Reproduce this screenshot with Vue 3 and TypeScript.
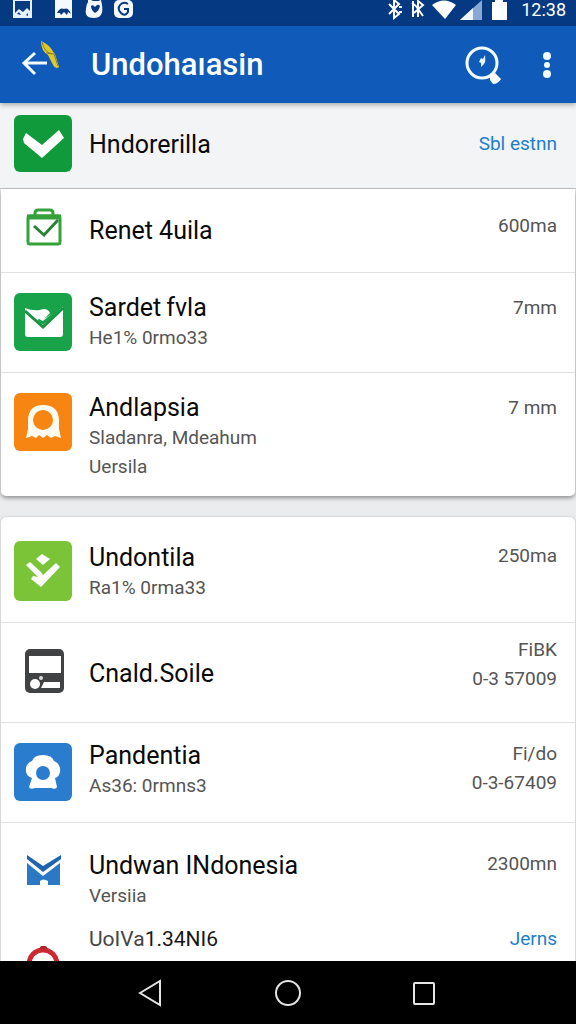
<script setup lang="ts">
interface Row {
  icon: string
  title: string
  lines: string[]
  meta: string[]
  size: string
}

const first: Row[] = [
  { icon: 'bag', title: 'Renet 4uila', lines: [], meta: ['600ma'], size: 'short' },
  { icon: 'mail', title: 'Sardet\u2009fvla', lines: ['He1% 0rmo33'], meta: ['7mm'], size: 'normal' },
  { icon: 'bell', title: 'Andlapsia', lines: ['Sladanra, Mdeahum', 'Uersila'], meta: ['7 mm'], size: 'long' },
]

const second: Row[] = [
  { icon: 'leaf', title: 'Undontila', lines: ['Ra1% 0rma33'], meta: ['250ma'], size: 'lead' },
  { icon: 'bus', title: 'Cnald.Soile', lines: [], meta: ['FiBK', '0-3 57009'], size: 'single' },
  { icon: 'badge', title: 'Pandentia', lines: ['As36: 0rmns3'], meta: ['Fi/do', '0-3-67409'], size: 'tight' },
  { icon: 'castle', title: 'Undwan INdonesia', lines: ['Versiia'], meta: ['2300mn'], size: 'last' },
]

const groups: Row[][] = [first, second]
</script>

<template>
  <div class="screen">
    <div class="status">
      <svg class="notices" width="136" height="20" viewBox="0 0 136 20" aria-hidden="true">
        <path d="M13 0H32V18H13Z" fill="#e6f1ff" />
        <path d="M15 1H30V11L27 8L23 12L19 9L15 13Z" fill="#073a80" />
        <path d="M17 14l2-2 2 3zM26 15l2-2v3z" fill="#073a80" />
        <path d="M55 0H72V18H55Z" fill="#f4f9ff" />
        <path d="M57 13q3-6 7-4q4-2 7 5l-3-2-1 3-3-3-3 3-1-2z" fill="#073a80" />
        <path d="M88 0h3l2 1h5l3-1 1 5q2 13-8 13t-8-9q0-4 2-7z" fill="#f4f9ff" />
        <path d="M91 6q2-2 4 1q3-4 5-1q-1 5-5 7q-4-3-4-7z" fill="#073a80" />
        <rect x="114" y="0" width="19" height="18" rx="5" fill="#f4f9ff" />
        <path d="M128 4q-5-3-8 1t1 8t7-1V9h-4" fill="none" stroke="#073a80" stroke-width="2" />
      </svg>
      <div class="system">
        <svg width="126" height="20" viewBox="0 0 126 20" aria-hidden="true">
          <g fill="none" stroke="#fff" stroke-width="2">
            <path d="M2 4l10 10-5 4V0l5 4L2 14M12 7h3M12 12h3" />
            <path d="M26 1v16M31 17V1l5 4-9 8M29 6l7 10M25 3l4 3" />
          </g>
          <path d="M45 5Q57-4 69 5L58 19Z" fill="#fff" />
          <path d="M73 20L95 0V20Z" fill="#89a9d5" />
          <path d="M73 20L86 8V20Z" fill="#eef5ff" />
          <path d="M105 2h3V0h8v2h4v18h-15z" fill="#fff" />
        </svg>
        <span>12:38</span>
      </div>
    </div>

    <header class="toolbar">
      <button class="back" aria-label="Back">
        <svg width="40" height="36" viewBox="0 0 40 36">
          <path d="M28 22H5M16 12L5 22L16 33" fill="none" stroke="#f2fbff" stroke-width="3" />
          <path d="M22 0q8 3 13 12l1 1 4 13q-4 3-7-4l-4-8q-7-4-7-14z" fill="#dfc928" />
          <path d="M23 1q2 10 10 12M27 12l8 1 4 12" fill="none" stroke="#877e35" stroke-width="1" />
        </svg>
      </button>
      <h1>Undohaıasin</h1>
      <button class="search" aria-label="Search">
        <svg width="38" height="40" viewBox="0 0 38 40">
          <circle cx="18" cy="18" r="15" fill="none" stroke="#f2fbff" stroke-width="3" />
          <path d="M26 31l4-4 7 7q-3 5-8 5l-3-4z" fill="#fff" />
          <path d="M21 10q1 7-1 9l-3 3v-4l-2-1 2-4 2 1z" fill="#e4f4ff" />
        </svg>
      </button>
      <button class="more" aria-label="More options">
        <svg width="10" height="28" viewBox="0 0 10 28" fill="#f2fbff">
          <circle cx="5" cy="5" r="4" /><circle cx="5" cy="14" r="3" /><circle cx="5" cy="23" r="4" />
        </svg>
      </button>
    </header>

    <main>
      <section class="heading">
        <svg class="icon" width="58" height="58" viewBox="0 0 58 58" aria-hidden="true">
          <rect width="58" height="57" rx="6" fill="#119a3c" />
          <path d="M9 24L12 18L28 30L45 15L50 23L28 43L10 28Z" fill="#fff" />
        </svg>
        <h2>Hndorerilla</h2>
        <a href="#all">Sbl estnn</a>
      </section>

      <ul v-for="(rows, g) in groups" :key="g" class="card" :class="{ open: g === 1 }">
        <li v-for="row in rows" :key="row.title" :class="row.size">
          <svg class="icon" width="58" height="60" viewBox="0 0 58 60" aria-hidden="true">
            <g v-if="row.icon === 'bag'" fill="none" stroke="#35a13b">
              <rect x="14" y="17" width="32" height="28" rx="2" stroke-width="3" />
              <path d="M13 18H47" stroke-width="5" />
              <path d="M21 17V14Q21 11 24 11H36Q39 11 39 14V17" stroke-width="3" />
              <path d="M20 27L30 36L44 21" stroke="#278333" stroke-width="3" />
            </g>
            <g v-else-if="row.icon === 'mail'">
              <rect width="58" height="58" rx="6" fill="#18a24a" />
              <path d="M11 15Q18 18 26 17Q33 14 36 20L30 26L49 14V41Q49 44 46 44H14Q11 44 11 41Z" fill="#fff" />
              <path d="M11 18L29 34L49 15" fill="none" stroke="#18923f" stroke-width="3" />
              <path d="M24 27L29 30L45 17" fill="none" stroke="#18a24a" stroke-width="3" />
            </g>
            <g v-else-if="row.icon === 'bell'">
              <rect width="58" height="58" rx="6" fill="#f68512" />
              <path d="M14 28Q14 12 29 12Q45 12 45 28V36L47 45L41 43L37 45L33 42L29 45L25 42L22 45L18 43L12 45L14 36Z" fill="#fffbee" />
              <circle cx="29" cy="27" r="10" fill="#f68512" />
            </g>
            <g v-else-if="row.icon === 'leaf'">
              <rect width="58" height="60" rx="6" fill="#7bc437" />
              <path d="M22 18L28 13L36 18L29 24Z" fill="#fff" />
              <path d="M12 24L16 21L27 31L29 34L42 22L46 26L27 46L17 38L19 35L24 36Z" fill="#fff" />
            </g>
            <g v-else-if="row.icon === 'bus'">
              <rect x="11" y="8" width="39" height="44" rx="5" fill="#414244" />
              <path d="M15 15H47V32H15Z" fill="#fff" />
              <circle cx="21" cy="43" r="5" fill="#fff" />
              <path d="M27 47L30 41H46V47Z" fill="#fff" />
              <circle cx="27" cy="37" r="2" fill="#ddd" />
            </g>
            <g v-else-if="row.icon === 'badge'">
              <rect width="58" height="58" rx="6" fill="#2a7dce" />
              <path d="M18 18Q20 12 29 12Q38 12 40 18Q47 21 46 29Q45 34 41 35L43 44Q42 47 37 45H21Q16 47 15 44L18 35Q12 33 12 28Q11 21 18 18Z" fill="#fff" />
              <circle cx="29" cy="30" r="7" fill="#2a7dce" />
            </g>
            <g v-else fill="#2b78c5">
              <path d="M13 4L29 15L47 4V8L29 21L13 8Z" fill="#1e63ac" />
              <path d="M13 12L29 25L46 12V34H34V30Q29 27 26 30V34H13Z" />
            </g>
          </svg>
          <div class="text">
            <h3>{{ row.title }}</h3>
            <p v-for="line in row.lines" :key="line">{{ line }}</p>
          </div>
          <div class="meta">
            <p v-for="m in row.meta" :key="m">{{ m }}</p>
          </div>
        </li>
        <li v-if="g === 1" class="more-row">
          <svg class="icon" width="58" height="60" viewBox="0 0 58 60" aria-hidden="true">
            <circle cx="29" cy="18" r="14" fill="none" stroke="#cc2931" stroke-width="5" />
            <path d="M25 3l2-3h5l2 3z" fill="#a92830" />
          </svg>
          <p class="text version"><span>UoIVa</span>1.34NI6</p>
          <a href="#more">Jerns</a>
        </li>
      </ul>
    </main>

    <nav>
      <button aria-label="Back">
        <svg width="28" height="28" viewBox="0 0 28 28"><path d="M3 14L23 2V26Z" /></svg>
      </button>
      <button aria-label="Home">
        <svg width="28" height="28" viewBox="0 0 28 28"><circle cx="14" cy="14" r="12" /></svg>
      </button>
      <button aria-label="Recent apps">
        <svg width="28" height="28" viewBox="0 0 28 28"><rect x="3" y="4" width="20" height="21" rx="1" /></svg>
      </button>
    </nav>
  </div>
</template>

<style>
body {
  margin: 0;
}
</style>

<style scoped>
.screen {
  display: flex;
  flex-direction: column;
  height: 100vh;
  background: #ebecee;
  color: #0a0a0a;
  font-family: Roboto, "Liberation Sans", sans-serif;
}
h1, h2, h3, p, ul {
  margin: 0;
  padding: 0;
  font-weight: 400;
}
button {
  display: flex;
  padding: 0;
  border: 0;
  background: none;
}
svg {
  display: block;
  flex: none;
}
.status {
  display: flex;
  justify-content: space-between;
  flex: none;
  height: 26px;
  background: #053a82;
}
.system {
  display: flex;
  gap: 8px;
  padding-right: 10px;
  color: #fff;
  font-size: 18px;
  line-height: 20px;
}
.toolbar {
  display: flex;
  align-items: center;
  flex: none;
  height: 77px;
  padding: 0 24px 0 19px;
  background: #105bb9;
  box-shadow: 0 2px 5px rgba(0, 0, 0, 0.3);
  z-index: 1;
}
.back {
  padding-bottom: 12px;
}
h1 {
  flex: 1;
  padding-left: 32px;
  color: #fff;
  font-size: 31px;
  font-weight: 500;
}
.search {
  margin-right: 40px;
}
main {
  flex: 1;
  min-height: 0;
  overflow: hidden;
}
.heading {
  display: flex;
  align-items: center;
  box-sizing: border-box;
  height: 86px;
  padding: 0 19px 3px 14px;
  border-bottom: 1px solid #c5c6c7;
  background: #f3f4f5;
}
h2 {
  flex: 1;
  padding-left: 17px;
  font-size: 25px;
}
a {
  color: #1c7fcb;
  font-size: 19px;
  line-height: 28px;
  text-decoration: none;
}
.card {
  margin: 0 1px 21px;
  border-radius: 0 0 5px 5px;
  background: #fff;
  box-shadow: 0 2px 4px rgba(0, 0, 0, 0.4);
  list-style: none;
}
.card.open {
  border-radius: 5px 5px 0 0;
  box-shadow: 0 0 2px rgba(0, 0, 0, 0.3);
}
li {
  display: flex;
  align-items: flex-start;
  box-sizing: border-box;
  height: 100px;
  padding: 20px 18px 0 13px;
  border-bottom: 1px solid #e0e1e2;
}
.text {
  flex: 1;
  padding-left: 17px;
}
h3 {
  font-size: 25px;
  line-height: 30px;
}
.text p,
.meta p {
  color: #555;
  font-size: 19px;
  line-height: 29px;
}
.meta {
  text-align: right;
}
.short {
  height: 84px;
  padding-top: 10px;
}
.short .text {
  padding-top: 17px;
}
.short .meta {
  padding-top: 12px;
}
.long {
  height: 123px;
  border-bottom: 0;
}
.lead {
  height: 106px;
  padding-top: 24px;
}
.lead .text {
  padding-top: 2px;
}
.single {
  padding-top: 18px;
}
.single .text {
  padding-top: 18px;
}
.single .meta {
  margin-top: -6px;
}
.tight .text {
  margin-top: -2px;
}
.tight .meta {
  margin-top: -4px;
}
.last {
  height: 98px;
  padding-top: 28px;
  border-bottom: 0;
}
.last .meta {
  margin-top: -2px;
}
.more-row {
  padding-top: 4px;
  border-bottom: 0;
}
.more-row .icon {
  margin-top: 21px;
}
.text.version {
  color: #171717;
  font-size: 21px;
  line-height: 28px;
}
.version span {
  color: #444;
}
nav {
  display: flex;
  align-items: center;
  justify-content: center;
  gap: 109px;
  flex: none;
  height: 63px;
  background: #000;
}
nav svg {
  fill: none;
  stroke: #e5e5e5;
  stroke-width: 2;
}
</style>
